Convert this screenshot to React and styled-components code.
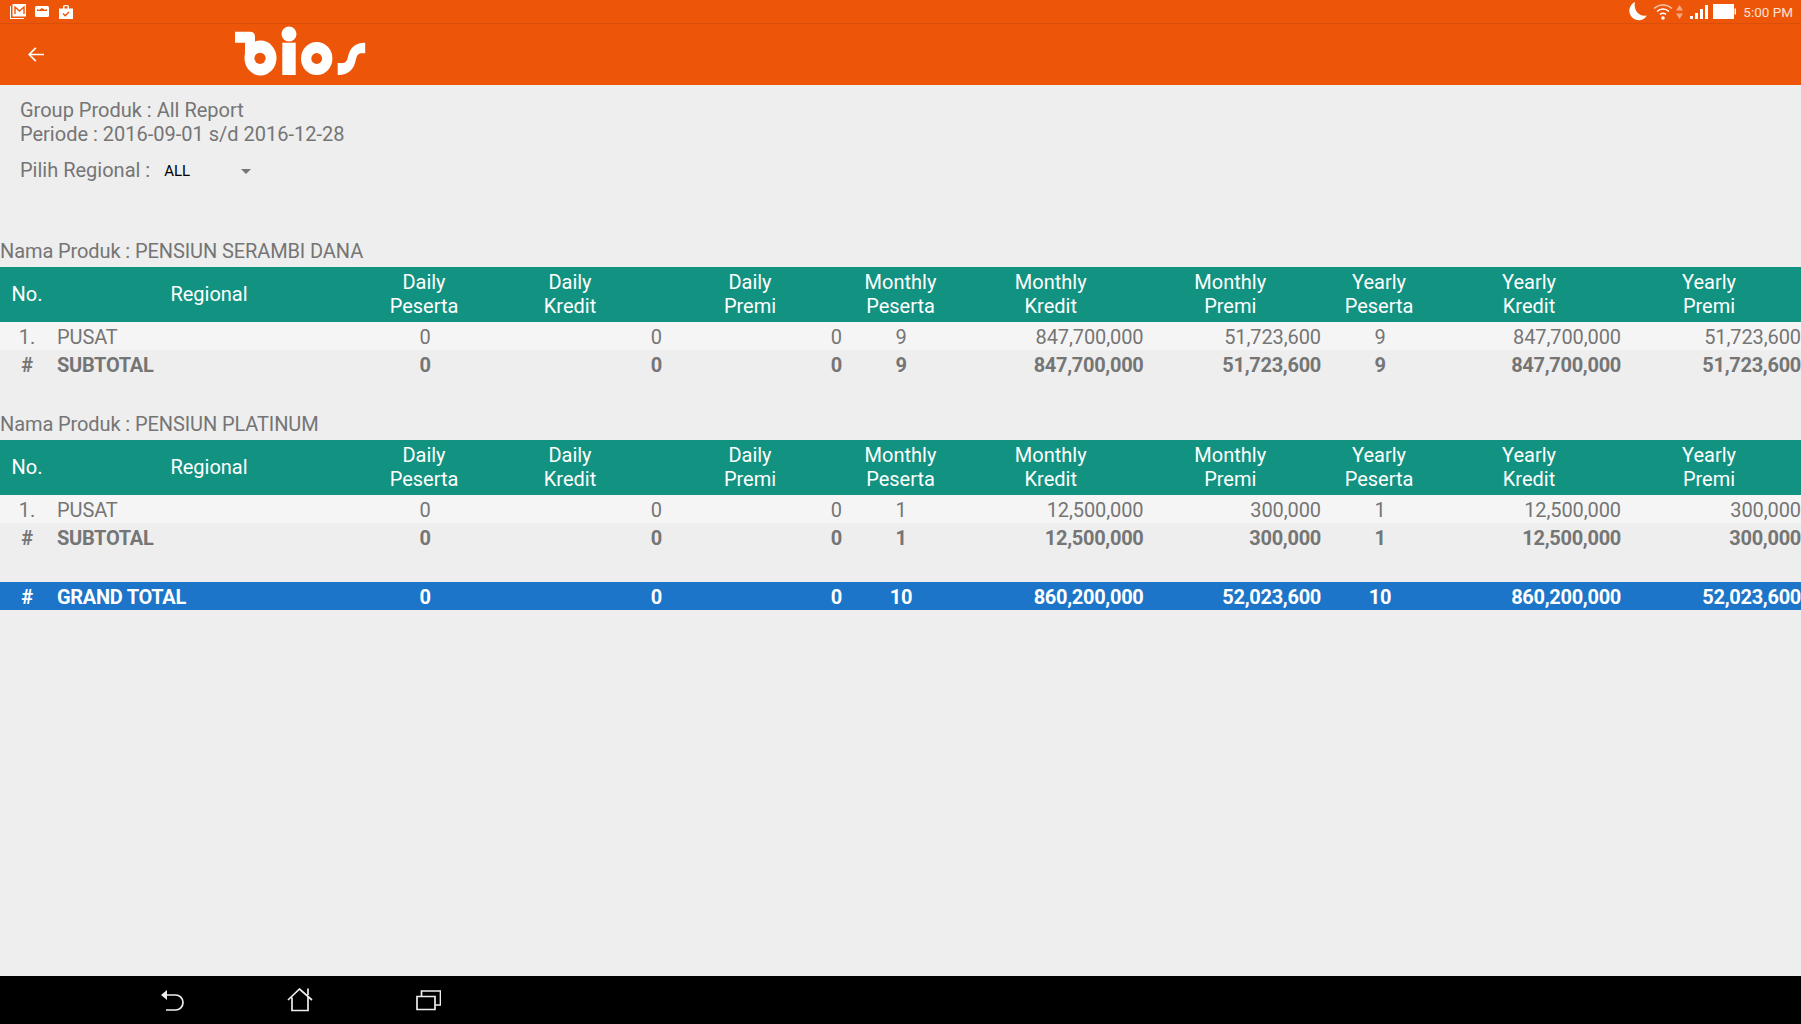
import React from 'react';
import styled, { createGlobalStyle } from 'styled-components';

const ORANGE = '#ed5509'

const GlobalStyle = createGlobalStyle`
  html, body { margin:0; padding:0; background:#eeeeee; }
  body { font-family:Roboto, "Liberation Sans", sans-serif; }
`

const Page = styled.div`
  width:1801px;
  height:1024px;
  display:flex;
  flex-direction:column;
  overflow:hidden;
  background:#eeeeee;
`

const StatusBar = styled.div`
  height:24px;
  flex:none;
  box-sizing:border-box;
  background:${ORANGE};
  border-bottom:1px solid #d94e08;
  display:flex;
  align-items:center;
  justify-content:space-between;
  padding:0 8px 0 10px;
`

const IconRow = styled.div`
  display:flex;
  align-items:center;
`

const StatusIcon = styled.svg`
  display:block;
  margin-left:${({space})=> space || 0}px;
`

const Clock = styled.span`
  color:#fbe3d5;
  font-size:13.5px;
  margin-left:7px;
`

const Toolbar = styled.div`
  height:61px;
  flex:none;
  background:${ORANGE};
  display:flex;
  align-items:center;
  padding-left:28px;
`

const Logo = styled.svg`
  display:block;
  margin-left:181px;
`

const Content = styled.div`
  flex:1;
  min-height:0;
`

const Info = styled.div`
  padding:13px 20px 0;
  color:#757575;
  font-size:20px;
  line-height:24px;
`

const PickRow = styled.div`
  display:flex;
  align-items:center;
  margin-top:11px;
`

const Picker = styled.div`
  width:87px;
  margin-left:14px;
  display:flex;
  align-items:center;
  justify-content:space-between;
  color:#000;
  font-size:15px;
  padding-top:2px;
`

const Caret = styled.span`
  width:0;
  height:0;
  border-left:5px solid transparent;
  border-right:5px solid transparent;
  border-top:5px solid #757575;
`

const Section = styled.div`
  margin-top:${({first})=> first ? 57 : 35}px;
`

const Title = styled.div`
  color:#757575;
  font-size:20px;
  letter-spacing:-0.1px;
  line-height:22px;
  height:27px;
`

const Row = styled.div`
  display:grid;
  grid-template-columns:54px 310px 122px 176px 180px 118px 183.5px 177.5px 118px 182px 180px;
  height:${({tall})=> tall ? 55 : 28}px;
  align-items:center;
  background:${({bg})=> bg || 'transparent'};
  color:${({fg})=> fg || '#757575'};
  font-size:20px;
  font-weight:${({bold})=> bold ? 700 : 400};
  letter-spacing:${({bold})=> bold ? -0.3 : -0.1}px;
  line-height:24px;
`

const Cell = styled.div`
  text-align:${({align})=> align || 'right'};
  padding-left:${({inset})=> inset || 0}px;
  padding-top:2px;
  white-space:nowrap;
`

const HeadCell = styled.div`
  text-align:center;
  letter-spacing:0;
  padding-right:${({nudge})=> nudge || 0}px;
  padding-bottom:2px;
  white-space:nowrap;
`

const Spacer = styled.div`
  height:${({h})=> h}px;
`

const NavBar = styled.div`
  height:48px;
  flex:none;
  background:#000;
  display:flex;
  align-items:center;
  padding-left:161px;
  gap:103px;
`

const heads = [
  ['Daily','Peserta',2],['Daily','Kredit',8],['Daily','Premi',4],
  ['Monthly','Peserta',1],['Monthly','Kredit',2],['Monthly','Premi',4],
  ['Yearly','Peserta',2],['Yearly','Kredit',2],['Yearly','Premi',4],
]

const HeadRow = ()=>(
  <Row tall bg="#129281" fg="#fff">
    <HeadCell>No.</HeadCell>
    <HeadCell>Regional</HeadCell>
    {heads.map((h,i)=>(
      <HeadCell key={i} nudge={h[2]}>{h[0]}<br/>{h[1]}</HeadCell>
    ))}
  </Row>
)

const Values = ({no,name,values,...rest})=>(
  <Row {...rest}>
    <Cell align="center">{no}</Cell>
    <Cell align="left" inset={3}>{name}</Cell>
    {values.map((v,i)=>(
      <Cell key={i} align={i%3===0 ? 'center':'right'}>{v}</Cell>
    ))}
  </Row>
)

const sections = [
  {title:'PENSIUN SERAMBI DANA', values:['0','0','0','9','847,700,000','51,723,600','9','847,700,000','51,723,600']},
  {title:'PENSIUN PLATINUM', values:['0','0','0','1','12,500,000','300,000','1','12,500,000','300,000']},
]

const Report = ()=>(
  <>
    {sections.map((s,i)=>(
      <Section key={s.title} first={i===0}>
        <Title>Nama Produk : {s.title}</Title>
        <HeadRow/>
        <Values no="1." name="PUSAT" values={s.values} bg="#f5f5f5"/>
        <Values no="#" name="SUBTOTAL" values={s.values} bold/>
      </Section>
    ))}
    <Spacer h={31}/>
    <Values no="#" name="GRAND TOTAL" bold bg="#1c75c8" fg="#fff"
      values={['0','0','0','10','860,200,000','52,023,600','10','860,200,000','52,023,600']}/>
  </>
)

const App = ()=>(
  <Page>
    <GlobalStyle/>
    <StatusBar>
      <IconRow>
        <StatusIcon width="16" height="15" viewBox="0 0 16 15"><path d="M0 2v13h14v-1H1V2z" fill="#fff"/><path d="M2.500 0H16v12.500H2.500z" fill="#fff"/><path d="M5 10V3l4.500 4 4.500-4v7" fill="none" stroke={ORANGE} strokeWidth="1.400"/></StatusIcon>
        <StatusIcon space={9} width="14" height="11" viewBox="0 0 14 11"><path d="M0 1.500Q0 0 1.500 0h11Q14 0 14 1.500v8q0 1.500-1.500 1.500h-11Q0 11 0 9.500z" fill="#fff"/><path d="M2 5V3l2 1 3-2 3 2 2-1v2z" fill={ORANGE}/></StatusIcon>
        <StatusIcon space={10} width="14" height="14" viewBox="0 0 14 14"><path d="M0 3.500h4V1.500C4 .5 5 0 7 0s3 .5 3 1.500v2h4V14H0z" fill="#fff"/><path d="M5.500 1.200h3v2.300h-3z" fill={ORANGE}/><path d="M4 8.500l2.200 2.200L10 7" fill="none" stroke={ORANGE} strokeWidth="1.400"/></StatusIcon>
      </IconRow>
      <IconRow>
        <StatusIcon width="19" height="19" viewBox="0 0 19 19"><path d="M7 0a9.500 9.500 0 1 0 12 13.500C12 15.500 5 9 7 0z" fill="#fff"/></StatusIcon>
        <StatusIcon space={6} width="20" height="17" viewBox="0 0 20 17" fill="none" stroke="#f9c6a9" strokeWidth="1.500"><path d="M1 5.500a13 13 0 0 1 18 0"/><path d="M4 8.500a8.500 8.500 0 0 1 12 0" stroke="#fff"/><path d="M7 11.500a4.200 4.200 0 0 1 6 0" stroke="#fff"/><circle cx="10" cy="15" r="1.800" fill="#fff" stroke="none"/></StatusIcon>
        <StatusIcon space={3} width="7" height="14" viewBox="0 0 7 14"><path d="M3.500 0L7 5.500H0zM3.500 14L7 8.500H0z" fill="#f6a77c"/></StatusIcon>
        <StatusIcon space={7} width="18" height="14" viewBox="0 0 18 14"><path d="M0 11h3v3H0zM5 8h3v6H5zM10 4h3v10h-3zM15 0h3v14h-3z" fill="#fff"/></StatusIcon>
        <StatusIcon space={5} width="23" height="15" viewBox="0 0 23 15"><path d="M0 0h21v15H0zM21.500 4.500H23v6h-1.500z" fill="#fff"/></StatusIcon>
        <Clock>5:00 PM</Clock>
      </IconRow>
    </StatusBar>
    <Toolbar>
      <svg width="16" height="15" viewBox="0 0 16 15" fill="none" stroke="#fff" strokeWidth="1.700"><path d="M7.800 .8L1.200 7.500l6.600 6.700M1.200 7.500H16"/></svg>
      <Logo width="150" height="61" viewBox="0 4 150 61" fill="#fff">
        <path d="M10 11.700H25Q30 11.700 30 17V38H20V22.700H10z"/>
        <ellipse cx="35.500" cy="38" rx="16" ry="17.500"/>
        <circle cx="35" cy="38.300" r="5.600" fill={ORANGE}/>
        <circle cx="64" cy="14" r="7.500"/>
        <path d="M57.300 22.700h13.400V55H57.300z"/>
        <ellipse cx="91.700" cy="38.500" rx="15.700" ry="16.500"/>
        <circle cx="91.700" cy="38.500" r="5.400" fill={ORANGE}/>
        <path d="M112.700 43h5c2.700 0 4-1.700 5-5 2-10 6.700-15.300 17.500-15.300V33.300h-3.500c-3.300 0-4.700 2-5.700 6-2 10-6.700 15.700-18.300 15.700z"/>
      </Logo>
    </Toolbar>
    <Content>
      <Info>
        <div>Group Produk : All Report</div>
        <div>Periode : 2016-09-01 s/d 2016-12-28</div>
        <PickRow>
          Pilih Regional :
          <Picker>ALL<Caret/></Picker>
        </PickRow>
      </Info>
      <Report/>
    </Content>
    <NavBar>
      <svg width="23" height="21" viewBox="0 0 23 21" fill="none" stroke="#eee" strokeWidth="1.700"><path d="M5 5H14.500a7.500 7.500 0 0 1 0 15H5"/><path d="M0 5L6 0V10z" fill="#eee" stroke="none"/></svg>
      <svg width="26" height="24" viewBox="0 0 26 24" fill="none" stroke="#eee" strokeWidth="1.700"><path d="M1 12L12.500 1L25 12M5 9.500V22.500H21V9M21 .5V7"/></svg>
      <svg width="25" height="21" viewBox="0 0 25 21" fill="none" stroke="#eee" strokeWidth="1.700"><path d="M1 6.500H19V19.500H1zM5.500 6.500V1H24.500V15H19"/></svg>
    </NavBar>
  </Page>
)

export default App
